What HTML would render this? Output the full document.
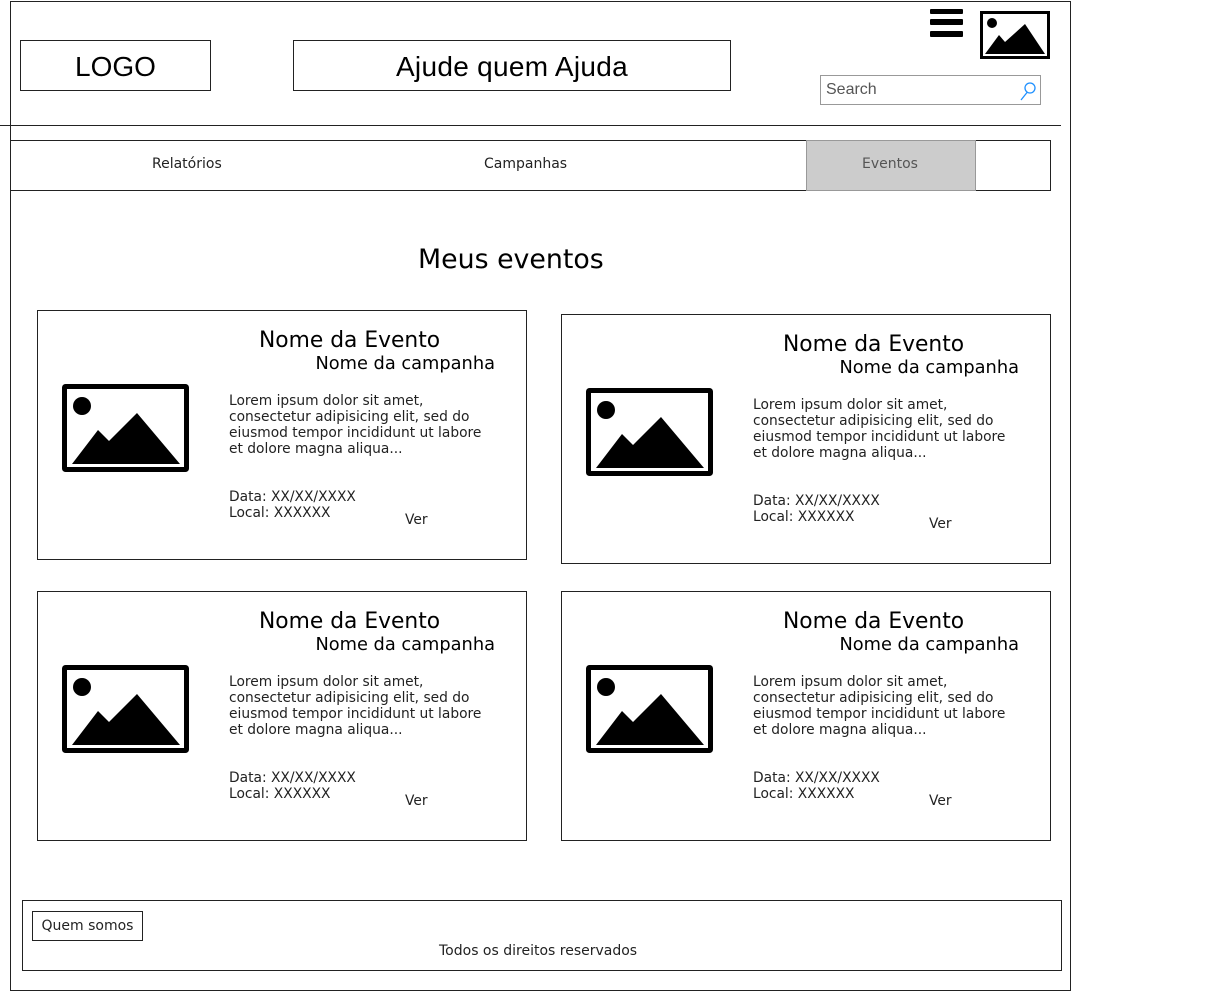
<!DOCTYPE html>
<html><head><meta charset="utf-8"><style>
*{margin:0;padding:0;box-sizing:border-box}
body{width:1221px;height:992px;background:#fff;position:relative;overflow:hidden;font-family:"DejaVu Sans",sans-serif;color:#000}
.a{position:absolute}
.box{position:absolute;border:1px solid #222}
.ls{font-family:"Liberation Sans",sans-serif}
.t{white-space:nowrap}
.card{position:absolute;width:490px;height:250px;border:1px solid #222}
.card .ti{position:absolute;left:221px;top:17px;font-size:21.8px;white-space:nowrap}
.card .ca{position:absolute;right:31px;top:42px;font-size:17.8px;white-space:nowrap}
.card svg{position:absolute;left:24px;top:73px}
.card .lo{position:absolute;left:191px;top:82px;font-size:13.8px;line-height:16px;color:#222;white-space:nowrap}
.card .da{position:absolute;left:191px;top:178px;font-size:13.8px;line-height:16px;color:#222;white-space:nowrap}
.card .ve{position:absolute;left:367px;top:201px;font-size:13.8px;color:#222}
</style></head><body>
<div class="box" style="left:10px;top:1px;width:1061px;height:990px"></div>
<div class="box ls" style="left:20px;top:40px;width:191px;height:51px;font-size:28px;text-align:center;line-height:52px">LOGO</div>
<div class="box ls" style="left:293px;top:40px;width:438px;height:51px;font-size:28px;text-align:center;line-height:52px;letter-spacing:0.3px">Ajude quem Ajuda</div>
<div class="a" style="left:930px;top:9px;width:33px;height:5px;background:#000;border-radius:1px"></div>
<div class="a" style="left:930px;top:19px;width:33px;height:6px;background:#000;border-radius:1px"></div>
<div class="a" style="left:930px;top:31px;width:33px;height:6px;background:#000;border-radius:1px"></div>
<svg class="a" style="left:980px;top:11px" width="70" height="48" viewBox="0 0 70 48"><rect x="1.5" y="1.5" width="67" height="45" fill="none" stroke="#000" stroke-width="3"/><circle cx="12" cy="12" r="5"/><path d="M5 43 L19 24 L25 31 L45 13 L65 43 Z"/></svg>
<div class="a ls" style="left:820px;top:75px;width:221px;height:30px;border:1px solid #999;font-size:16px;color:#555;padding:5px 5px">Search</div>
<svg class="a" style="left:1018px;top:80px" width="20" height="22"><circle cx="12" cy="8" r="5" fill="none" stroke="#1e90ff" stroke-width="1.3"/><line x1="9" y1="12.5" x2="3" y2="20" stroke="#1e90ff" stroke-width="1.3"/></svg>
<div class="a" style="left:0;top:125px;width:1061px;height:1px;background:#222"></div>
<div class="box" style="left:10px;top:140px;width:1041px;height:51px"></div>
<div class="a" style="left:806px;top:140px;width:170px;height:51px;background:#ccc;border:1px solid #999"></div>
<div class="a t" style="left:152px;top:156px;font-size:14px;color:#222">Relatórios</div>
<div class="a t" style="left:484px;top:156px;font-size:14px;color:#222">Campanhas</div>
<div class="a t" style="left:862px;top:156px;font-size:14px;color:#555">Eventos</div>
<div class="a t" style="left:418px;top:244px;font-size:26.8px">Meus eventos</div>

<div class="card" style="left:37px;top:310px">
<div class="ti">Nome da Evento</div><div class="ca">Nome da campanha</div>
<svg width="127" height="88" viewBox="0 0 127 88"><rect x="2.5" y="2.5" width="122" height="83" fill="none" stroke="#000" stroke-width="5" rx="1"/><circle cx="20" cy="22" r="9"/><path d="M10 80 L36 46 L47 57 L75 29 L118 80 Z"/></svg>
<div class="lo">Lorem ipsum dolor sit amet,<br>consectetur adipisicing elit, sed do<br>eiusmod tempor incididunt ut labore<br>et dolore magna aliqua...</div>
<div class="da">Data: XX/XX/XXXX<br>Local: XXXXXX</div><div class="ve">Ver</div></div>

<div class="card" style="left:561px;top:314px">
<div class="ti">Nome da Evento</div><div class="ca">Nome da campanha</div>
<svg width="127" height="88" viewBox="0 0 127 88"><rect x="2.5" y="2.5" width="122" height="83" fill="none" stroke="#000" stroke-width="5" rx="1"/><circle cx="20" cy="22" r="9"/><path d="M10 80 L36 46 L47 57 L75 29 L118 80 Z"/></svg>
<div class="lo">Lorem ipsum dolor sit amet,<br>consectetur adipisicing elit, sed do<br>eiusmod tempor incididunt ut labore<br>et dolore magna aliqua...</div>
<div class="da">Data: XX/XX/XXXX<br>Local: XXXXXX</div><div class="ve">Ver</div></div>

<div class="card" style="left:37px;top:591px">
<div class="ti">Nome da Evento</div><div class="ca">Nome da campanha</div>
<svg width="127" height="88" viewBox="0 0 127 88"><rect x="2.5" y="2.5" width="122" height="83" fill="none" stroke="#000" stroke-width="5" rx="1"/><circle cx="20" cy="22" r="9"/><path d="M10 80 L36 46 L47 57 L75 29 L118 80 Z"/></svg>
<div class="lo">Lorem ipsum dolor sit amet,<br>consectetur adipisicing elit, sed do<br>eiusmod tempor incididunt ut labore<br>et dolore magna aliqua...</div>
<div class="da">Data: XX/XX/XXXX<br>Local: XXXXXX</div><div class="ve">Ver</div></div>

<div class="card" style="left:561px;top:591px">
<div class="ti">Nome da Evento</div><div class="ca">Nome da campanha</div>
<svg width="127" height="88" viewBox="0 0 127 88"><rect x="2.5" y="2.5" width="122" height="83" fill="none" stroke="#000" stroke-width="5" rx="1"/><circle cx="20" cy="22" r="9"/><path d="M10 80 L36 46 L47 57 L75 29 L118 80 Z"/></svg>
<div class="lo">Lorem ipsum dolor sit amet,<br>consectetur adipisicing elit, sed do<br>eiusmod tempor incididunt ut labore<br>et dolore magna aliqua...</div>
<div class="da">Data: XX/XX/XXXX<br>Local: XXXXXX</div><div class="ve">Ver</div></div>

<div class="box" style="left:22px;top:900px;width:1040px;height:71px"></div>
<div class="box" style="left:32px;top:911px;width:111px;height:30px;font-size:14px;line-height:29px;text-align:center;color:#222">Quem somos</div>
<div class="a t" style="left:439px;top:943px;font-size:14px;color:#222">Todos os direitos reservados</div>
</body></html>
